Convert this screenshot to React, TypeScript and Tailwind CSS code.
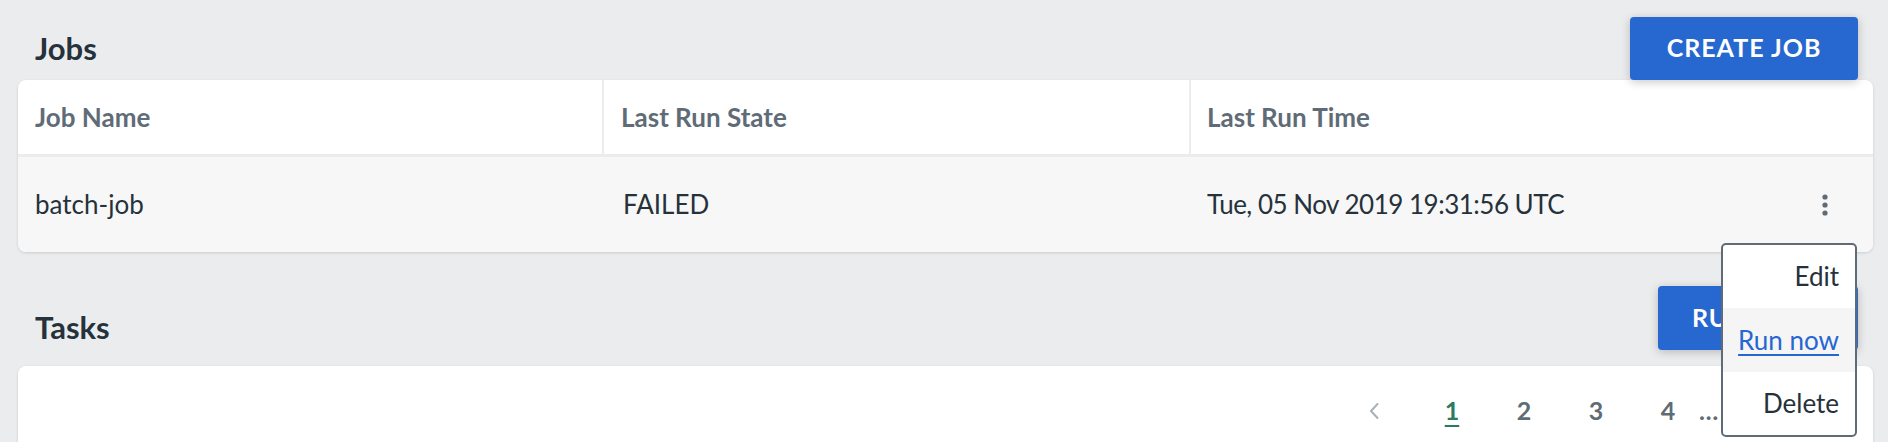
import { useState } from 'react';

const jobs = [
  { id: 1, name: 'batch-job', state: 'FAILED', time: 'Tue, 05 Nov 2019 19:31:56 UTC' },
];

function DotsIcon() {
  return (
    <svg width="8" height="22" viewBox="0 0 8 22" className="fill-[#5f6b75]">
      <circle cx="4" cy="3" r="2.6" />
      <circle cx="4" cy="11" r="2.6" />
      <circle cx="4" cy="19" r="2.6" />
    </svg>
  );
}

function ChevronIcon({ dir }: { dir: 'left' | 'right' }) {
  return (
    <svg width="10" height="16" viewBox="0 0 10 16" fill="none">
      <polyline
        points={dir === 'left' ? '8.5,1 2,8 8.5,15' : '1.5,1 8,8 1.5,15'}
        stroke="#a9b1b7"
        strokeWidth="2"
        strokeLinecap="round"
        strokeLinejoin="round"
      />
    </svg>
  );
}

export default function App() {
  const [menuOpen] = useState(true);
  const [page] = useState(1);

  return (
    <div className="min-h-screen bg-[#ebecee] pl-[18px] pr-[15px] pt-4 pb-10 font-['Lato','Noto_Sans',sans-serif] text-[#26323b]">
      <section>
        <div className="flex h-[64px] items-center justify-between">
          <h2 className="pl-[17px] text-[31px] font-bold leading-none text-[#26323b]">Jobs</h2>
          <button className="mr-[15px] h-[63px] w-[228px] rounded-[4px] bg-[#2767d0] text-[25px] font-bold tracking-[1px] text-white shadow-[0_2px_10px_rgba(0,0,0,0.22)]">
            CREATE JOB
          </button>
        </div>

        <div className="rounded-lg bg-white shadow-[0_1px_3px_rgba(0,0,0,0.14)]">
          <div className="grid h-[77px] grid-cols-[586px_587px_1fr] border-b-[3px] border-[#ebecee] text-[26px] font-bold text-[#5f6c77]">
            <div className="flex items-center border-r-2 border-[#ebecee] pl-[17px]">Job Name</div>
            <div className="flex items-center border-r-2 border-[#ebecee] pl-[17px]">Last Run State</div>
            <div className="flex items-center pl-[16px]">Last Run Time</div>
          </div>

          {jobs.map((job) => (
            <div
              key={job.id}
              className="grid h-[95px] grid-cols-[586px_587px_1fr_90px] rounded-b-lg bg-[#f7f7f7] text-[26px]"
            >
              <div className="flex items-center pl-[17px]">{job.name}</div>
              <div className="flex items-center pl-[19px]">{job.state}</div>
              <div className="flex items-center pl-[16px] tracking-[-0.5px]">{job.time}</div>
              <div className="relative flex items-center justify-end pr-[41px]">
                <button className="flex h-[30px] w-[14px] items-center justify-center">
                  <DotsIcon />
                </button>
                {menuOpen && (
                  <div className="absolute right-[16px] top-[86px] z-20 w-[136px] overflow-hidden rounded-[5px] border-2 border-[#5f6b75] bg-white text-[26px]">
                    <div className="flex h-[63px] items-center justify-end pr-[16px] text-[#26323b]">Edit</div>
                    <div className="flex h-[64px] items-center justify-end bg-[#f5f5f5] pr-[16px] text-[#2666d2] underline underline-offset-4">
                      Run now
                    </div>
                    <div className="flex h-[63px] items-center justify-end pr-[16px] text-[#26323b]">Delete</div>
                  </div>
                )}
              </div>
            </div>
          ))}
        </div>
      </section>

      <section className="mt-[34px]">
        <div className="flex h-[64px] items-center justify-between">
          <h2 className="mt-[18px] pl-[17px] text-[31px] font-bold leading-none text-[#26323b]">Tasks</h2>
          <button className="mr-[15px] h-[64px] w-[200px] rounded-[4px] bg-[#2767d0] text-[25px] font-bold tracking-[1px] text-white shadow-[0_2px_10px_rgba(0,0,0,0.22)]">
            RUN NOW
          </button>
        </div>

        <div className="mt-4 h-[160px] rounded-lg bg-white shadow-[0_1px_3px_rgba(0,0,0,0.14)]">
          <div className="flex h-[90px] items-center justify-end pr-[22px] text-[25px] font-bold text-[#5f6b75]">
            <div className="mr-[6px] flex w-[72px] justify-center">
              <ChevronIcon dir="left" />
            </div>
            {[1, 2, 3, 4].map((n) => (
              <div key={n} className="flex w-[72px] justify-center">
                <span
                  className={
                    n === page
                      ? 'text-[#2d7a5f] underline decoration-2 underline-offset-[5px]'
                      : ''
                  }
                >
                  {n}
                </span>
              </div>
            ))}
            <div className="-ml-[5px] w-[40px] text-left">…</div>
            <div className="flex w-[64px] justify-center">10</div>
            <div className="flex w-[48px] justify-center">
              <ChevronIcon dir="right" />
            </div>
          </div>
        </div>
      </section>
    </div>
  );
}
